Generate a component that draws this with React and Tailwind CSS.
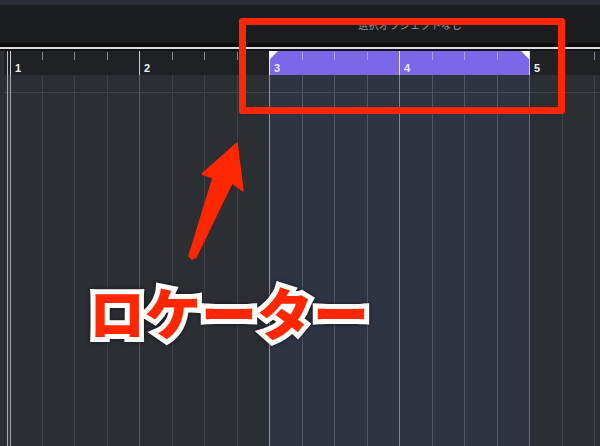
import React from "react";

const cells = Array.from({ length: 19 }, (_, i) => i);

function RulerCell({ i }) {
  const isBar = i % 4 === 0;
  const inLoc = i >= 8 && i < 16;
  const width = i === 0 ? "w-[31.5px]" : "w-[32.5px]";
  const bg = inLoc ? "bg-[#7b67e7]" : "bg-[#1f2124]";
  if (isBar) {
    const border =
      i === 8 || i === 12 ? "border-[#f4f2ff]" : i === 16 ? "border-[#d9d9d9]" : "border-[#cfcfcf]";
    const txt = inLoc ? "text-[#ece8ff]" : "text-[#f2f2f2]";
    return (
      <div className={`${width} shrink-0 h-full border-l ${border} ${bg} relative`}>
        {i === 8 && (
          <div className="absolute left-0 top-0 w-0 h-0 border-t-[8px] border-r-[8px] border-t-white border-r-transparent" />
        )}
        <div className={`pl-[4px] pt-[12px] text-[11px] leading-none font-bold ${txt} [font-family:'Liberation_Sans',Arial,sans-serif]`}>
          {i / 4 + 1}
        </div>
      </div>
    );
  }
  const tick = inLoc ? "bg-[#ada2f3]" : "bg-[#86898d]";
  return (
    <div className={`${width} shrink-0 h-full ${bg} relative`}>
      <div className={`w-px h-[8px] mt-[1px] ${tick}`} />
      {i === 15 && (
        <div className="absolute right-0 top-0 w-0 h-0 border-t-[8px] border-l-[8px] border-t-white border-l-transparent" />
      )}
    </div>
  );
}

function GridCell({ i }) {
  const isBar = i % 4 === 0;
  const inLoc = i >= 8 && i < 16;
  const width = i === 0 ? "w-[31.5px]" : "w-[32.5px]";
  const bg = inLoc ? "bg-[#2e3542]" : "bg-[#2b2e33]";
  let border;
  if (i === 8) border = "border-[#8e9298]";
  else if (i === 0) border = "border-[#a8a8a8]";
  else if (i === 16) border = "border-[#67696d]";
  else if (isBar) border = inLoc ? "border-[#7e848f]" : "border-[#595c60]";
  else border = inLoc ? "border-[#4d5463]" : "border-[#3d4044]";
  const hline = inLoc ? "border-[#454c59]" : "border-[#404347]";
  return (
    <div className={`${width} shrink-0 h-full border-l ${border} ${bg} flex flex-col`}>
      <div className={`h-[18px] border-b ${hline}`} />
    </div>
  );
}

export default function App() {
  return (
    <div className="w-[600px] h-[446px] relative overflow-hidden bg-[#2b2e33] flex flex-col">
      {/* header */}
      <div className="h-[5px] bg-[#2a2d31] shrink-0" />
      <div className="h-[38px] bg-[#1b1c1e] shrink-0 pl-[358px] pt-[13px]">
        <div className="text-[10.4px] leading-[13px] text-[#8f949b] whitespace-nowrap [font-family:'Noto_Sans_CJK_JP','Noto_Sans',sans-serif]">
          選択オブジェクトなし
        </div>
      </div>
      <div className="h-[4px] bg-[#0d0d0e] shrink-0" />
      <div className="h-[2px] bg-[#dcdcdc] shrink-0" />
      <div className="h-[2px] bg-[#121314] shrink-0" />

      {/* ruler */}
      <div className="h-[24px] shrink-0 flex">
        <div className="w-[4px] shrink-0 h-full bg-[#2b2e33]" />
        <div className="w-[3px] shrink-0 h-full bg-[#1f2124]" />
        <div className="w-px shrink-0 h-full bg-[#bdbdbd]" />
        <div className="w-[2px] shrink-0 h-full bg-[#1f2124]" />
        {cells.map((i) => (
          <RulerCell key={i} i={i} />
        ))}
      </div>

      {/* grid */}
      <div className="flex-1 flex">
        <div className="w-[4px] shrink-0 h-full" />
        <div className="w-[3px] shrink-0 h-full flex flex-col">
          <div className="h-[18px] border-b border-[#404347]" />
        </div>
        <div className="w-px shrink-0 h-full bg-[#a8a8a8]" />
        <div className="w-[2px] shrink-0 h-full flex flex-col bg-[#35383d]">
          <div className="h-[18px] border-b border-[#404347]" />
        </div>
        {cells.map((i) => (
          <GridCell key={i} i={i} />
        ))}
      </div>

      {/* annotation: red box */}
      <div className="absolute left-[239px] top-[18px] w-[326px] h-[96px] border-[7px] border-[#ff2600] rounded-[3px]" />

      {/* annotation: arrow */}
      <svg className="absolute left-0 top-0" width="600" height="446" viewBox="0 0 600 446">
        <polygon
          points="237,143 243,191 232,183 196,257 192,259 189,256 213,178 202,174"
          fill="#ff2600"
          stroke="#ff2600"
          strokeWidth="1.5"
          strokeLinejoin="round"
        />
      </svg>

      {/* annotation: label */}
      <div className="absolute left-[89px] top-[283px] text-[56px] leading-none font-black whitespace-nowrap [font-family:'Noto_Sans_CJK_JP','Noto_Sans',sans-serif]">
        <span className="text-white [-webkit-text-stroke:10px_white] drop-shadow-[0_0_2px_rgba(0,0,0,0.6)]">
          ロケーター
        </span>
        <span className="absolute left-0 top-0 text-[#ff2600]">ロケーター</span>
      </div>
    </div>
  );
}
